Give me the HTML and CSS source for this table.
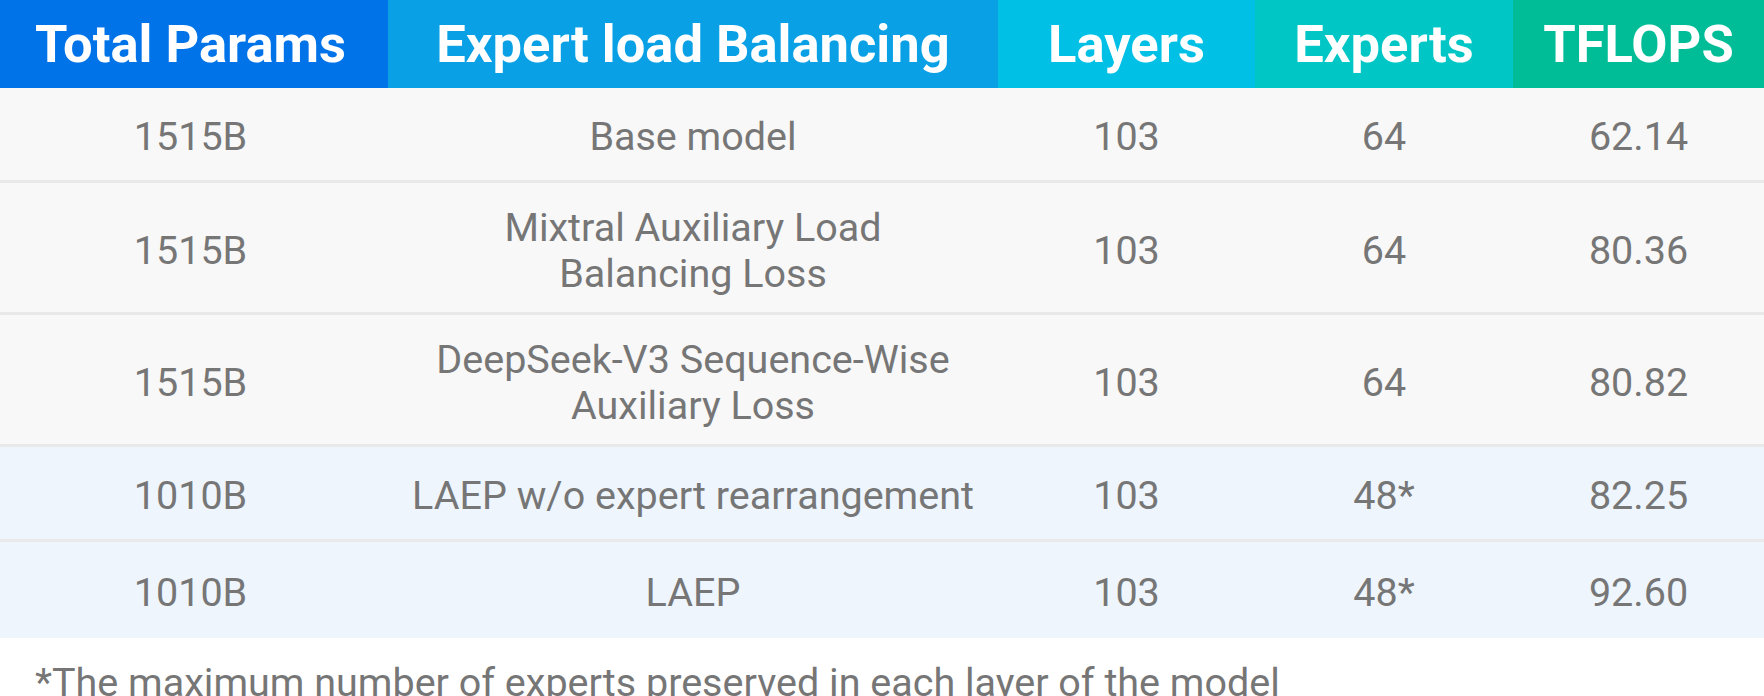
FILE: index.html
```html
<!DOCTYPE html>
<html lang="en">
<head>
<meta charset="utf-8">
<title>Expert load balancing comparison</title>
<link rel="stylesheet" href="styles.css">
</head>
<body>
<div class="table">
  <div class="row head">
    <div class="cell c1">Total Params</div>
    <div class="cell c2">Expert load Balancing</div>
    <div class="cell c3">Layers</div>
    <div class="cell c4">Experts</div>
    <div class="cell c5">TFLOPS</div>
  </div>
  <div class="row gray">
    <div class="cell">1515B</div>
    <div class="cell">Base model</div>
    <div class="cell">103</div>
    <div class="cell">64</div>
    <div class="cell">62.14</div>
  </div>
  <div class="row gray">
    <div class="cell">1515B</div>
    <div class="cell">Mixtral Auxiliary Load<br>Balancing Loss</div>
    <div class="cell">103</div>
    <div class="cell">64</div>
    <div class="cell">80.36</div>
  </div>
  <div class="row gray">
    <div class="cell">1515B</div>
    <div class="cell">DeepSeek-V3 Sequence-Wise<br>Auxiliary Loss</div>
    <div class="cell">103</div>
    <div class="cell">64</div>
    <div class="cell">80.82</div>
  </div>
  <div class="row blue">
    <div class="cell">1010B</div>
    <div class="cell">LAEP w/o expert rearrangement</div>
    <div class="cell">103</div>
    <div class="cell">48*</div>
    <div class="cell">82.25</div>
  </div>
  <div class="row blue last">
    <div class="cell">1010B</div>
    <div class="cell">LAEP</div>
    <div class="cell">103</div>
    <div class="cell">48*</div>
    <div class="cell">92.60</div>
  </div>
</div>
<p class="note">*The maximum number of experts preserved in each layer of the model</p>
</body>
</html>
```
FILE: styles.css
```css
html, body {
  margin: 0;
  padding: 0;
  background: #ffffff;
  font-family: Roboto, "Liberation Sans", sans-serif;
  overflow: hidden;
}

.table {
  display: flex;
  flex-direction: column;
  width: 1764px;
}

.row {
  display: grid;
  grid-template-columns: 388px 610px 257px 258px 251px;
  min-height: 95px;
  box-sizing: border-box;
  border-bottom: 3px solid #e9e9e9;
}

.cell {
  display: flex;
  align-items: center;
  justify-content: center;
  text-align: center;
  font-size: 39.5px;
  line-height: 46px;
  color: #767676;
  padding: 21.5px 0 15.5px;
}

.row > .cell:first-child {
  padding-right: 7px;
}

.head {
  min-height: 88px;
  border-bottom: none;
}

.head .cell {
  color: #ffffff;
  font-weight: 700;
  font-size: 52.5px;
  line-height: 60px;
  padding-top: 0;
  padding-bottom: 0;
}

.head .c1 { background: #0073e8; }
.head .c2 { background: #09a0e5; }
.head .c3 { background: #00c0e6; }
.head .c4 { background: #00c7c6; }
.head .c5 { background: #00bd98; }

.gray { background: #f8f8f8; }
.blue { background: #eef5fd; }
.last { border-bottom: none; min-height: 96px; }

.note {
  margin: 22px 0 0 35px;
  font-size: 39.5px;
  line-height: 46px;
  color: #767676;
  white-space: nowrap;
}
```
